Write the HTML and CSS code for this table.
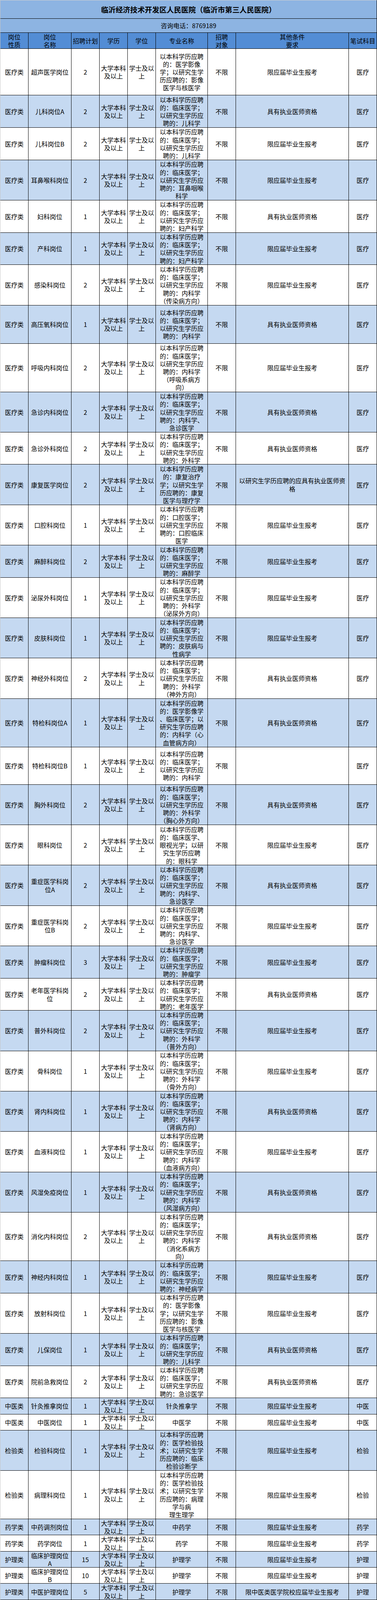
FILE: index.html
```html
<!DOCTYPE html>
<html lang="zh-CN">
<head>
<meta charset="utf-8">
<title>临沂经济技术开发区人民医院招聘岗位表</title>
<link rel="stylesheet" href="styles.css">
</head>
<body>
<div class="sheet">
  <div class="title">临沂经济技术开发区人民医院（临沂市第三人民医院）</div>
  <div class="phone">咨询电话：8769189</div>
  <div class="row head h46">
    <div><span>岗位<br>性质</span></div><div><span>岗位<br>名称</span></div><div>招聘计划</div><div>学历</div><div>学位</div><div>专业名称</div><div><span>招聘<br>对象</span></div><div><span>其他条件<br>要求</span></div><div>笔试科目</div>
  </div>

  <div class="row h133">
    <div>医疗类</div><div>超声医学岗位</div><div>2</div><div><span>大学本科<br>及以上</span></div><div><span>学士及以<br>上</span></div><div><span>以本科学历应聘<br>的：医学影像<br>学；以研究生学<br>历应聘的：影像<br>医学与核医学</span></div><div>不限</div><div>限应届毕业生报考</div><div>医疗</div>
  </div>
  <div class="row h92 alt">
    <div>医疗类</div><div>儿科岗位A</div><div>2</div><div><span>大学本科<br>及以上</span></div><div><span>学士及以<br>上</span></div><div><span>以本科学历应聘<br>的：临床医学；<br>以研究生学历应<br>聘的：儿科学</span></div><div>不限</div><div>具有执业医师资格</div><div>医疗</div>
  </div>
  <div class="row h92">
    <div>医疗类</div><div>儿科岗位B</div><div>2</div><div><span>大学本科<br>及以上</span></div><div><span>学士及以<br>上</span></div><div><span>以本科学历应聘<br>的：临床医学；<br>以研究生学历应<br>聘的：儿科学</span></div><div>不限</div><div>限应届毕业生报考</div><div>医疗</div>
  </div>
  <div class="row h115 alt">
    <div>医疗类</div><div>耳鼻喉科岗位</div><div>2</div><div><span>大学本科<br>及以上</span></div><div><span>学士及以<br>上</span></div><div><span>以本科学历应聘<br>的：临床医学；<br>以研究生学历应<br>聘的：耳鼻咽喉<br>科学</span></div><div>不限</div><div>限应届毕业生报考</div><div>医疗</div>
  </div>
  <div class="row h92">
    <div>医疗类</div><div>妇科岗位</div><div>1</div><div><span>大学本科<br>及以上</span></div><div><span>学士及以<br>上</span></div><div><span>以本科学历应聘<br>的：临床医学；<br>以研究生学历应<br>聘的：妇产科学</span></div><div>不限</div><div>具有执业医师资格</div><div>医疗</div>
  </div>
  <div class="row h92 alt">
    <div>医疗类</div><div>产科岗位</div><div>1</div><div><span>大学本科<br>及以上</span></div><div><span>学士及以<br>上</span></div><div><span>以本科学历应聘<br>的：临床医学；<br>以研究生学历应<br>聘的：妇产科学</span></div><div>不限</div><div>限应届毕业生报考</div><div>医疗</div>
  </div>
  <div class="row h115">
    <div>医疗类</div><div>感染科岗位</div><div>2</div><div><span>大学本科<br>及以上</span></div><div><span>学士及以<br>上</span></div><div><span>以本科学历应聘<br>的：临床医学；<br>以研究生学历应<br>聘的：内科学<br>（传染病方向）</span></div><div>不限</div><div>限应届毕业生报考</div><div>医疗</div>
  </div>
  <div class="row h109 alt">
    <div>医疗类</div><div>高压氧科岗位</div><div>1</div><div><span>大学本科<br>及以上</span></div><div><span>学士及以<br>上</span></div><div><span>以本科学历应聘<br>的：临床医学；<br>以研究生学历应<br>聘的：内科学</span></div><div>不限</div><div>具有执业医师资格</div><div>医疗</div>
  </div>
  <div class="row h138">
    <div>医疗类</div><div>呼吸内科岗位</div><div>2</div><div><span>大学本科<br>及以上</span></div><div><span>学士及以<br>上</span></div><div><span>以本科学历应聘<br>的：临床医学；<br>以研究生学历应<br>聘的：内科学<br>（呼吸系病方<br>向）</span></div><div>不限</div><div>限应届毕业生报考</div><div>医疗</div>
  </div>
  <div class="row h115 alt">
    <div>医疗类</div><div>急诊内科岗位</div><div>2</div><div><span>大学本科<br>及以上</span></div><div><span>学士及以<br>上</span></div><div><span>以本科学历应聘<br>的：临床医学；<br>以研究生学历应<br>聘的：内科学、<br>急诊医学</span></div><div>不限</div><div>具有执业医师资格</div><div>医疗</div>
  </div>
  <div class="row h92">
    <div>医疗类</div><div>急诊外科岗位</div><div>2</div><div><span>大学本科<br>及以上</span></div><div><span>学士及以<br>上</span></div><div><span>以本科学历应聘<br>的：临床医学；<br>以研究生学历应<br>聘的：外科学</span></div><div>不限</div><div>具有执业医师资格</div><div>医疗</div>
  </div>
  <div class="row h115 alt">
    <div>医疗类</div><div>康复医学岗位</div><div>2</div><div><span>大学本科<br>及以上</span></div><div><span>学士及以<br>上</span></div><div><span>以本科学历应聘<br>的：康复治疗<br>学；以研究生学<br>历应聘的：康复<br>医学与理疗学</span></div><div>不限</div><div><span>以研究生学历应聘的应具有执业医师资<br>格</span></div><div>医疗</div>
  </div>
  <div class="row h115">
    <div>医疗类</div><div>口腔科岗位</div><div>1</div><div><span>大学本科<br>及以上</span></div><div><span>学士及以<br>上</span></div><div><span>以本科学历应聘<br>的：口腔医学；<br>以研究生学历应<br>聘的：口腔临床<br>医学</span></div><div>不限</div><div>限应届毕业生报考</div><div>医疗</div>
  </div>
  <div class="row h92 alt">
    <div>医疗类</div><div>麻醉科岗位</div><div>2</div><div><span>大学本科<br>及以上</span></div><div><span>学士及以<br>上</span></div><div><span>以本科学历应聘<br>的：临床医学；<br>以研究生学历应<br>聘的：麻醉学</span></div><div>不限</div><div>限应届毕业生报考</div><div>医疗</div>
  </div>
  <div class="row h115">
    <div>医疗类</div><div>泌尿外科岗位</div><div>1</div><div><span>大学本科<br>及以上</span></div><div><span>学士及以<br>上</span></div><div><span>以本科学历应聘<br>的：临床医学；<br>以研究生学历应<br>聘的：外科学<br>（泌尿外方向）</span></div><div>不限</div><div>限应届毕业生报考</div><div>医疗</div>
  </div>
  <div class="row h115 alt">
    <div>医疗类</div><div>皮肤科岗位</div><div>1</div><div><span>大学本科<br>及以上</span></div><div><span>学士及以<br>上</span></div><div><span>以本科学历应聘<br>的：临床医学；<br>以研究生学历应<br>聘的：皮肤病与<br>性病学</span></div><div>不限</div><div>限应届毕业生报考</div><div>医疗</div>
  </div>
  <div class="row h115">
    <div>医疗类</div><div>神经外科岗位</div><div>2</div><div><span>大学本科<br>及以上</span></div><div><span>学士及以<br>上</span></div><div><span>以本科学历应聘<br>的：临床医学；<br>以研究生学历应<br>聘的：外科学<br>（神外方向）</span></div><div>不限</div><div>具有执业医师资格</div><div>医疗</div>
  </div>
  <div class="row h138 alt">
    <div>医疗类</div><div>特检科岗位A</div><div>1</div><div><span>大学本科<br>及以上</span></div><div><span>学士及以<br>上</span></div><div><span>以本科学历应聘<br>的：医学影像学<br>、临床医学；以<br>研究生学历应聘<br>的：内科学（心<br>血管病方向）</span></div><div>不限</div><div>具有执业医师资格</div><div>医疗</div>
  </div>
  <div class="row h107">
    <div>医疗类</div><div>特检科岗位B</div><div>1</div><div><span>大学本科<br>及以上</span></div><div><span>学士及以<br>上</span></div><div><span>以本科学历应聘<br>的：临床医学；<br>以研究生学历应<br>聘的：内科学</span></div><div>不限</div><div></div><div>医疗</div>
  </div>
  <div class="row h115 alt">
    <div>医疗类</div><div>胸外科岗位</div><div>2</div><div><span>大学本科<br>及以上</span></div><div><span>学士及以<br>上</span></div><div><span>以本科学历应聘<br>的：临床医学；<br>以研究生学历应<br>聘的：外科学<br>（胸心外方向）</span></div><div>不限</div><div>具有执业医师资格</div><div>医疗</div>
  </div>
  <div class="row h115">
    <div>医疗类</div><div>眼科岗位</div><div>2</div><div><span>大学本科<br>及以上</span></div><div><span>学士及以<br>上</span></div><div><span>以本科学历应聘<br>的：临床医学、<br>眼视光学；以研<br>究生学历应聘<br>的：眼科学</span></div><div>不限</div><div>限应届毕业生报考</div><div>医疗</div>
  </div>
  <div class="row h115 alt">
    <div>医疗类</div><div><span>重症医学科岗<br>位A</span></div><div>2</div><div><span>大学本科<br>及以上</span></div><div><span>学士及以<br>上</span></div><div><span>以本科学历应聘<br>的：临床医学；<br>以研究生学历应<br>聘的：内科学、<br>急诊医学</span></div><div>不限</div><div>具有执业医师资格</div><div>医疗</div>
  </div>
  <div class="row h115">
    <div>医疗类</div><div><span>重症医学科岗<br>位B</span></div><div>2</div><div><span>大学本科<br>及以上</span></div><div><span>学士及以<br>上</span></div><div><span>以本科学历应聘<br>的：临床医学；<br>以研究生学历应<br>聘的：内科学、<br>急诊医学</span></div><div>不限</div><div>限应届毕业生报考</div><div>医疗</div>
  </div>
  <div class="row h92 alt">
    <div>医疗类</div><div>肿瘤科岗位</div><div>3</div><div><span>大学本科<br>及以上</span></div><div><span>学士及以<br>上</span></div><div><span>以本科学历应聘<br>的：临床医学；<br>以研究生学历应<br>聘的：肿瘤学</span></div><div>不限</div><div>限应届毕业生报考</div><div>医疗</div>
  </div>
  <div class="row h92">
    <div>医疗类</div><div><span>老年医学科岗<br>位</span></div><div>2</div><div><span>大学本科<br>及以上</span></div><div><span>学士及以<br>上</span></div><div><span>以本科学历应聘<br>的：临床医学；<br>以研究生学历应<br>聘的：老年医学</span></div><div>不限</div><div>具有执业医师资格</div><div>医疗</div>
  </div>
  <div class="row h115 alt">
    <div>医疗类</div><div>普外科岗位</div><div>2</div><div><span>大学本科<br>及以上</span></div><div><span>学士及以<br>上</span></div><div><span>以本科学历应聘<br>的：临床医学；<br>以研究生学历应<br>聘的：外科学<br>（普外方向）</span></div><div>不限</div><div>限应届毕业生报考</div><div>医疗</div>
  </div>
  <div class="row h115">
    <div>医疗类</div><div>骨科岗位</div><div>1</div><div><span>大学本科<br>及以上</span></div><div><span>学士及以<br>上</span></div><div><span>以本科学历应聘<br>的：临床医学；<br>以研究生学历应<br>聘的：外科学<br>（骨外方向）</span></div><div>不限</div><div>限应届毕业生报考</div><div>医疗</div>
  </div>
  <div class="row h115 alt">
    <div>医疗类</div><div>肾内科岗位</div><div>1</div><div><span>大学本科<br>及以上</span></div><div><span>学士及以<br>上</span></div><div><span>以本科学历应聘<br>的：临床医学；<br>以研究生学历应<br>聘的：内科学<br>（肾病方向）</span></div><div>不限</div><div>具有执业医师资格</div><div>医疗</div>
  </div>
  <div class="row h115">
    <div>医疗类</div><div>血液科岗位</div><div>1</div><div><span>大学本科<br>及以上</span></div><div><span>学士及以<br>上</span></div><div><span>以本科学历应聘<br>的：临床医学；<br>以研究生学历应<br>聘的：内科学<br>（血液病方向）</span></div><div>不限</div><div>限应届毕业生报考</div><div>医疗</div>
  </div>
  <div class="row h115 alt">
    <div>医疗类</div><div>风湿免疫岗位</div><div>1</div><div><span>大学本科<br>及以上</span></div><div><span>学士及以<br>上</span></div><div><span>以本科学历应聘<br>的：临床医学；<br>以研究生学历应<br>聘的：内科学<br>（风湿病方向）</span></div><div>不限</div><div>具有执业医师资格</div><div>医疗</div>
  </div>
  <div class="row h138">
    <div>医疗类</div><div>消化内科岗位</div><div>2</div><div><span>大学本科<br>及以上</span></div><div><span>学士及以<br>上</span></div><div><span>以本科学历应聘<br>的：临床医学；<br>以研究生学历应<br>聘的：内科学<br>（消化系病方<br>向）</span></div><div>不限</div><div>具有执业医师资格</div><div>医疗</div>
  </div>
  <div class="row h92 alt">
    <div>医疗类</div><div>神经内科岗位</div><div>1</div><div><span>大学本科<br>及以上</span></div><div><span>学士及以<br>上</span></div><div><span>以本科学历应聘<br>的：临床医学；<br>以研究生学历应<br>聘的：神经病学</span></div><div>不限</div><div>限应届毕业生报考</div><div>医疗</div>
  </div>
  <div class="row h115">
    <div>医疗类</div><div>放射科岗位</div><div>1</div><div><span>大学本科<br>及以上</span></div><div><span>学士及以<br>上</span></div><div><span>以本科学历应聘<br>的：医学影像<br>学；以研究生学<br>历应聘的：影像<br>医学与核医学</span></div><div>不限</div><div>限应届毕业生报考</div><div>医疗</div>
  </div>
  <div class="row h92 alt">
    <div>医疗类</div><div>儿保岗位</div><div>1</div><div><span>大学本科<br>及以上</span></div><div><span>学士及以<br>上</span></div><div><span>以本科学历应聘<br>的：临床医学；<br>以研究生学历应<br>聘的：儿科学</span></div><div>不限</div><div>具有执业医师资格</div><div>医疗</div>
  </div>
  <div class="row h92">
    <div>医疗类</div><div>院前急救岗位</div><div>2</div><div><span>大学本科<br>及以上</span></div><div><span>学士及以<br>上</span></div><div><span>以本科学历应聘<br>的：临床医学；<br>以研究生学历应<br>聘的：急诊医学</span></div><div>不限</div><div>具有执业医师资格</div><div>医疗</div>
  </div>
  <div class="row h46 alt">
    <div>中医类</div><div>针灸推拿岗位</div><div>1</div><div><span>大学本科<br>及以上</span></div><div><span>学士及以<br>上</span></div><div>针灸推拿学</div><div>不限</div><div>限应届毕业生报考</div><div>中医</div>
  </div>
  <div class="row h46">
    <div>中医类</div><div>中医岗位</div><div>1</div><div><span>大学本科<br>及以上</span></div><div><span>学士及以<br>上</span></div><div>中医学</div><div>不限</div><div>限应届毕业生报考</div><div>中医</div>
  </div>
  <div class="row h115 alt">
    <div>检验类</div><div>检验科岗位</div><div>1</div><div><span>大学本科<br>及以上</span></div><div><span>学士及以<br>上</span></div><div><span>以本科学历应聘<br>的：医学检验技<br>术；以研究生学<br>历应聘的：临床<br>检验诊断学</span></div><div>不限</div><div>限应届毕业生报考</div><div>检验</div>
  </div>
  <div class="row h138">
    <div>检验类</div><div>病理科岗位</div><div>1</div><div><span>大学本科<br>及以上</span></div><div><span>学士及以<br>上</span></div><div><span>以本科学历应聘<br>的：医学检验技<br>术；以研究生学<br>历应聘的：病理<br>学与病<br>理生理学</span></div><div>不限</div><div>限应届毕业生报考</div><div>检验</div>
  </div>
  <div class="row h46 alt">
    <div>药学类</div><div>中药调剂岗位</div><div>1</div><div><span>大学本科<br>及以上</span></div><div><span>学士及以<br>上</span></div><div>中药学</div><div>不限</div><div>限应届毕业生报考</div><div>药学</div>
  </div>
  <div class="row h46">
    <div>药学类</div><div>药学岗位</div><div>1</div><div><span>大学本科<br>及以上</span></div><div><span>学士及以<br>上</span></div><div>药学</div><div>不限</div><div>限应届毕业生报考</div><div>药学</div>
  </div>
  <div class="row h46 alt">
    <div>护理类</div><div><span>临床护理岗位<br>A</span></div><div>15</div><div><span>大学本科<br>及以上</span></div><div><span>学士及以<br>上</span></div><div>护理学</div><div>不限</div><div>限应届毕业生报考</div><div>护理</div>
  </div>
  <div class="row h46">
    <div>护理类</div><div><span>临床护理岗位<br>B</span></div><div>10</div><div><span>大学本科<br>及以上</span></div><div><span>学士及以<br>上</span></div><div>护理学</div><div>不限</div><div>限应届毕业生报考</div><div>护理</div>
  </div>
  <div class="row h46 alt">
    <div>护理类</div><div>中医护理岗位</div><div>5</div><div><span>大学本科<br>及以上</span></div><div><span>学士及以<br>上</span></div><div>护理学</div><div>不限</div><div>限中医类医学院校应届毕业生报考</div><div>护理</div>
  </div>
</div>
</body>
</html>
```

FILE: styles.css
```css
:root {
  /* the browser frame is 4096px tall; the sheet is laid out 4559px * k so the whole table stays in view */
  --k: 0.89844;
}

html, body {
  margin: 0;
  padding: 0;
  background: #ffffff;
}

body {
  font-family: "Noto Sans CJK SC", "Microsoft YaHei", sans-serif;
  font-size: 16px;
  line-height: calc(22.5px * var(--k));
  color: #000000;
}

.sheet {
  width: 965px;
  box-sizing: border-box;
  border-left: 1px solid #c6c6c6;
}

.title,
.phone {
  display: flex;
  align-items: center;
  justify-content: center;
  box-sizing: border-box;
  background: #8db4e2;
  border-right: 1px solid #000000;
  border-bottom: 1px solid #000000;
  white-space: nowrap;
  overflow: hidden;
}

.title {
  height: calc(53px * var(--k));
  border-top: 1px solid #d2d2d2;
  font-size: 18.67px;
  font-weight: bold;
}

.phone {
  height: calc(40px * var(--k));
}

.row {
  display: grid;
  grid-template-columns: 72px 110px 72px 72px 72px 133px 72px 289px 72px;
  grid-template-rows: minmax(0, 1fr);
  box-sizing: border-box;
  background: #ffffff;
}

.row.alt {
  background: #c5d9f1;
}

.row.head {
  background: #538dd5;
}

.row > div {
  display: flex;
  align-items: center;
  justify-content: center;
  text-align: center;
  box-sizing: border-box;
  border-right: 1px solid #000000;
  border-bottom: 1px solid #000000;
  white-space: nowrap;
  min-width: 0;
  min-height: 0;
}

.row > div > span {
  display: block;
}

.h46 { height: calc(46px * var(--k)); }
.h92 { height: calc(92px * var(--k)); }
.h107 { height: calc(107px * var(--k)); }
.h109 { height: calc(109px * var(--k)); }
.h115 { height: calc(115px * var(--k)); }
.h133 { height: calc(133px * var(--k)); }
.h138 { height: calc(138px * var(--k)); }
```
